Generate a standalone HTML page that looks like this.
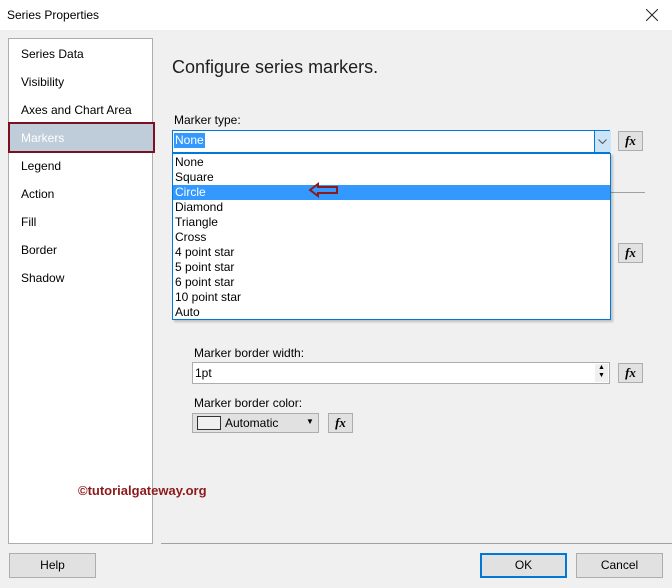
<!DOCTYPE html><html><head><style>
body{margin:0;width:672px;height:588px;background:#f0f0f0;font-family:"Liberation Sans",sans-serif;font-size:12px;color:#000;position:relative;overflow:hidden}
.a{position:absolute}
.fx{position:absolute;width:25px;height:20px;background:#e1e1e1;border:1px solid #adadad;font-family:"Liberation Serif",serif;font-style:italic;font-weight:bold;font-size:13px;text-align:center;line-height:18px;box-sizing:border-box}
.nav{position:absolute;left:21px;font-size:12px}
.btn{position:absolute;height:25px;background:#e1e1e1;border:1px solid #adadad;box-sizing:border-box;text-align:center;line-height:23px;font-size:12px}
.it{height:15px;line-height:15px;padding-left:2px}
</style></head><body>
<div class="a" style="left:0;top:0;width:672px;height:30px;background:#fff"></div>
<div class="a" style="left:7px;top:8px">Series Properties</div>
<svg class="a" style="left:646px;top:9px" width="12" height="12"><path d="M0 0L12 12M12 0L0 12" stroke="#222" stroke-width="1"/></svg>
<div class="a" style="left:8px;top:38px;width:145px;height:506px;background:#fff;border:1px solid #adadad;box-sizing:border-box"></div>
<div class="a" style="left:8px;top:122px;width:147px;height:31px;background:#bfcddb;border:2px solid #7b1020;box-sizing:border-box"></div>
<div class="nav" style="top:47px">Series Data</div>
<div class="nav" style="top:75px">Visibility</div>
<div class="nav" style="top:103px">Axes and Chart Area</div>
<div class="nav" style="top:131px;color:#fff">Markers</div>
<div class="nav" style="top:159px">Legend</div>
<div class="nav" style="top:187px">Action</div>
<div class="nav" style="top:215px">Fill</div>
<div class="nav" style="top:243px">Border</div>
<div class="nav" style="top:271px">Shadow</div>
<div class="a" style="left:172px;top:57px;font-size:18px;color:#1e1e1e">Configure series markers.</div>
<div class="a" style="left:174px;top:113px">Marker type:</div>
<div class="a" style="left:172px;top:130px;width:438px;height:23px;background:#fff;border:1px solid #0078d7;box-sizing:border-box"></div>
<div class="a" style="left:174px;top:133px;background:#3399ff;color:#fff;padding:0 1px;line-height:15px">None</div>
<div class="a" style="left:594px;top:131px;width:16px;height:21px;background:#cce4f7;border-left:1px solid #0078d7"></div>
<svg class="a" style="left:598px;top:139px" width="9" height="6"><path d="M0.5 0.5L4.5 4.5L8.5 0.5" fill="none" stroke="#555" stroke-width="1"/></svg>
<div class="fx" style="left:618px;top:131px">fx</div>
<div class="a" style="left:610px;top:192px;width:35px;height:1px;background:#a0a0a0"></div>
<div class="fx" style="left:618px;top:243px">fx</div>
<div class="a" style="left:172px;top:153px;width:439px;height:167px;background:#fff;border:1px solid #0078d7;box-sizing:border-box;padding-top:1px;box-shadow:2px 2px 2px rgba(0,0,0,.2)">
<div class="it">None</div><div class="it">Square</div><div class="it" style="background:#3399ff;color:#fff">Circle</div><div class="it">Diamond</div><div class="it">Triangle</div><div class="it">Cross</div><div class="it">4 point star</div><div class="it">5 point star</div><div class="it">6 point star</div><div class="it">10 point star</div><div class="it">Auto</div></div>
<svg class="a" style="left:308px;top:181px" width="32" height="18"><path d="M2 9 L10 3 L10 6 L29 6 L29 12 L10 12 L10 15 Z" fill="none" stroke="#8b1a1a" stroke-width="2"/></svg>
<div class="a" style="left:194px;top:346px">Marker border width:</div>
<div class="a" style="left:192px;top:362px;width:418px;height:22px;background:#fff;border:1px solid #adadad;box-sizing:border-box;padding:3px 0 0 2px">1pt</div>
<div class="a" style="left:595px;top:364px;width:13px;height:18px;font-size:7px;line-height:8px;text-align:center;background:#f0f0f0">▲<br>▼</div>
<div class="fx" style="left:618px;top:363px">fx</div>
<div class="a" style="left:194px;top:396px">Marker border color:</div>
<div class="a" style="left:192px;top:413px;width:127px;height:20px;background:#e1e1e1;border:1px solid #adadad;box-sizing:border-box"></div>
<div class="a" style="left:197px;top:416px;width:22px;height:12px;border:1px solid #333;background:#f0f0f0"></div>
<div class="a" style="left:225px;top:416px">Automatic</div>
<div class="a" style="left:306px;top:417px;font-size:8px">▼</div>
<div class="fx" style="left:328px;top:413px;height:20px">fx</div>
<div class="a" style="left:78px;top:483px;color:#8b1a1a;font-weight:bold;font-size:13px">©tutorialgateway.org</div>
<div class="a" style="left:161px;top:543px;width:511px;height:1px;background:#a0a0a0"></div>
<div class="btn" style="left:9px;top:553px;width:87px">Help</div>
<div class="btn" style="left:480px;top:553px;width:87px;border:2px solid #0078d7;line-height:21px">OK</div>
<div class="btn" style="left:576px;top:553px;width:87px">Cancel</div>
</body></html>
